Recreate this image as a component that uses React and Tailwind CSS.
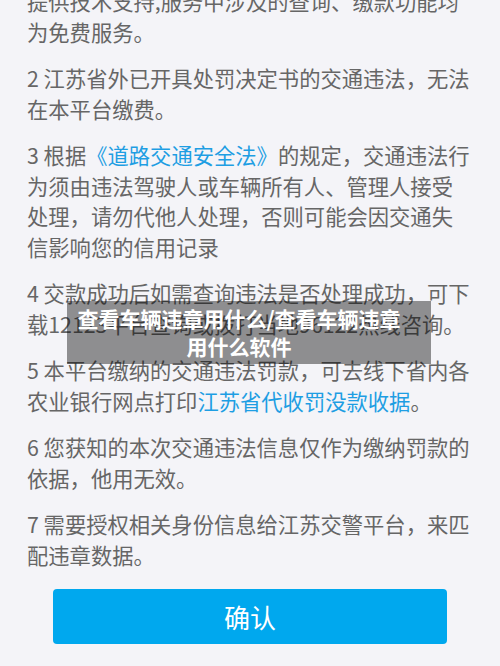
const paragraphs = [
  [{ t: '提供技术支持,服务中涉及的查询、缴款功能均为免费服务。' }],
  [{ t: '2 江苏省外已开具处罚决定书的交通违法，无法在本平台缴费。' }],
  [
    { t: '3 根据' },
    { t: '《道路交通安全法》', link: true },
    { t: '的规定，交通违法行为须由违法驾驶人或车辆所有人、管理人接受处理，请勿代他人处理，否则可能会因交通失信影响您的信用记录' },
  ],
  [{ t: '4 交款成功后如需查询违法是否处理成功，可下载12123平台查询或拨打当地96122热线咨询。' }],
  [
    { t: '5 本平台缴纳的交通违法罚款，可去线下省内各农业银行网点打印' },
    { t: '江苏省代收罚没款收据', link: true },
    { t: '。' },
  ],
  [{ t: '6 您获知的本次交通违法信息仅作为缴纳罚款的依据，他用无效。' }],
  [{ t: '7 需要授权相关身份信息给江苏交警平台，来匹配违章数据。' }],
];

export default function App() {
  return (
    <div
      className="relative w-[500px] h-[666px] overflow-hidden bg-[#f4f4f8]"
      style={{ fontFamily: '"Noto Sans CJK SC", "Noto Sans", sans-serif' }}
    >
      {/* notice list */}
      <div className="-mt-[14px] pl-[27px] pr-[29px] flex flex-col gap-4">
        {paragraphs.map((p, i) => (
          <p key={i} className="text-[21.3px] leading-[30.5px] text-[#666666]">
            {p.map((s, j) =>
              s.link ? (
                <span key={j} className="text-[#1e9ee3]">{s.t}</span>
              ) : (
                <span key={j}>{s.t}</span>
              )
            )}
          </p>
        ))}
      </div>

      <div className="px-[53px] mt-[19px]">
        <button className="w-full h-[55px] rounded-[4px] bg-[#00a8ee] text-white text-[26px] flex items-center justify-center">
          确认
        </button>
      </div>

      {/* title banner */}
      <div className="absolute left-[67px] top-[301px] w-[364px] pl-[7px] pr-[27px] pt-[3px] pb-[4px] bg-[rgba(0,0,0,0.42)] text-center text-white font-bold text-[21px] leading-[28px]">
        查看车辆违章用什么/查看车辆违章用什么软件
      </div>
    </div>
  );
}
